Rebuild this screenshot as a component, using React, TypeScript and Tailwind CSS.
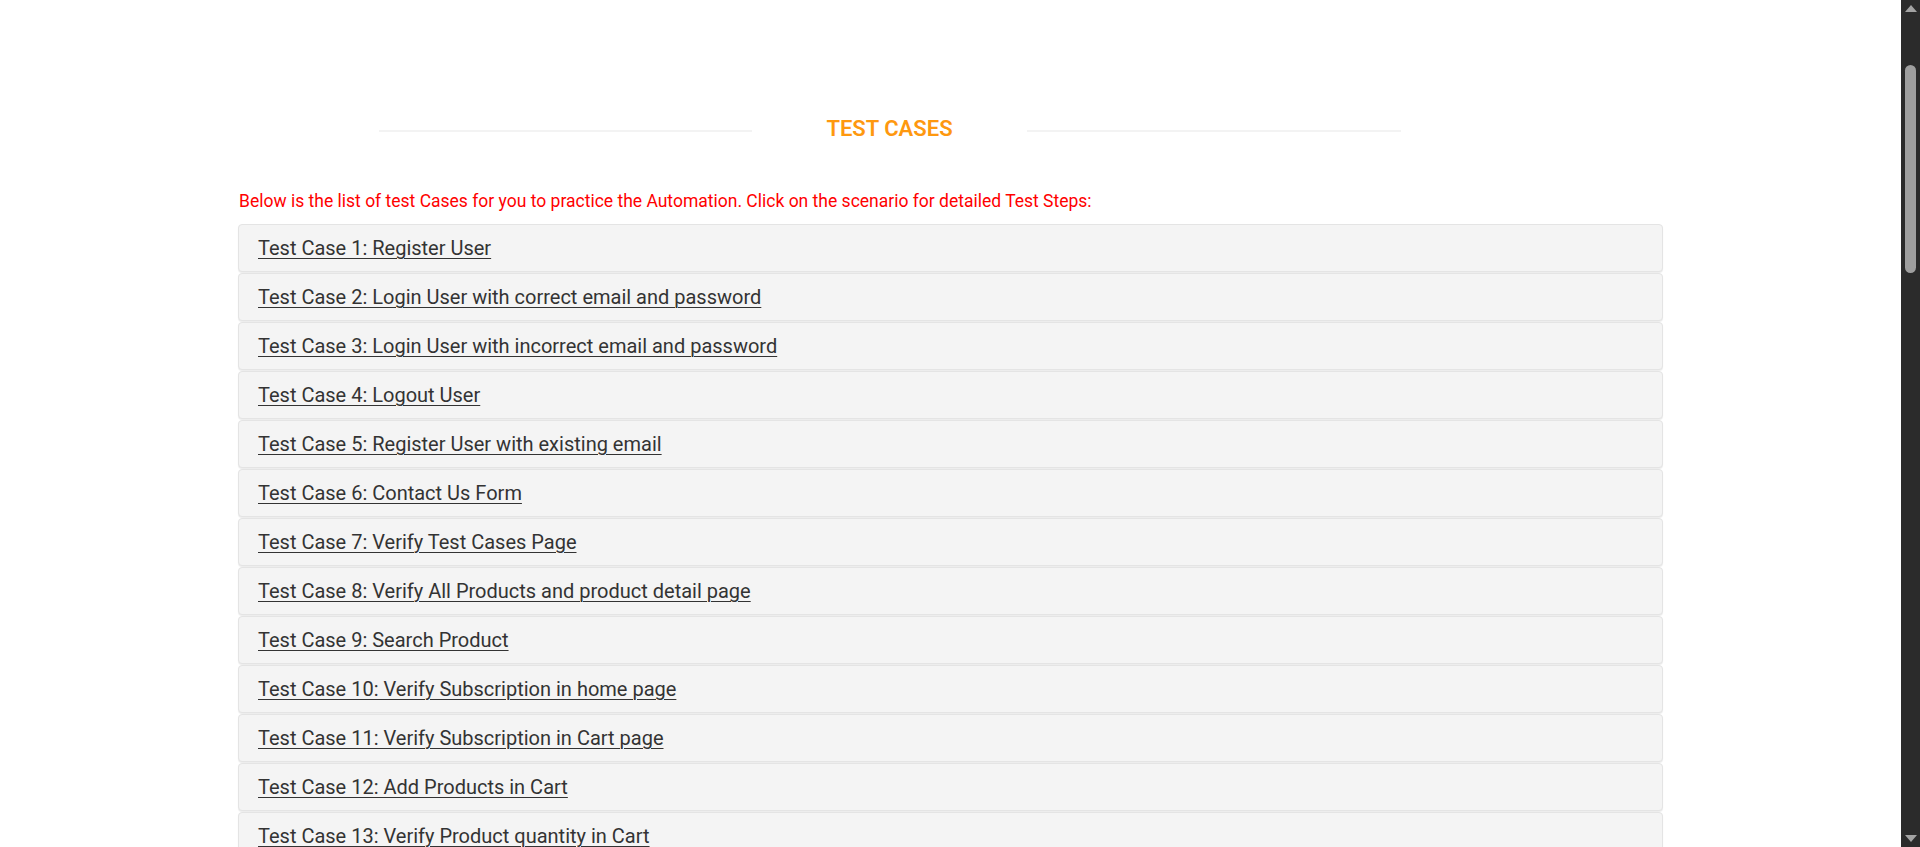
import React from 'react';

const cases = [
  'Test Case 1: Register User',
  'Test Case 2: Login User with correct email and password',
  'Test Case 3: Login User with incorrect email and password',
  'Test Case 4: Logout User',
  'Test Case 5: Register User with existing email',
  'Test Case 6: Contact Us Form',
  'Test Case 7: Verify Test Cases Page',
  'Test Case 8: Verify All Products and product detail page',
  'Test Case 9: Search Product',
  'Test Case 10: Verify Subscription in home page',
  'Test Case 11: Verify Subscription in Cart page',
  'Test Case 12: Add Products in Cart',
  'Test Case 13: Verify Product quantity in Cart',
  'Test Case 14: Place Order: Register while Checkout',
];

function Scrollbar() {
  return (
    <div className="w-[19px] shrink-0 bg-[#2b2b2b] flex flex-col items-center justify-between py-[5px]">
      <div className="flex flex-col items-center w-full">
        <div className="w-0 h-0 border-l-[6px] border-r-[6px] border-b-[7px] border-l-transparent border-r-transparent border-b-[#a3a3a3]" />
        <div className="mt-[53px] w-[11px] h-[208px] rounded-full bg-[#9f9f9f]" />
      </div>
      <div className="w-0 h-0 border-l-[6px] border-r-[6px] border-t-[7px] border-l-transparent border-r-transparent border-t-[#a3a3a3]" />
    </div>
  );
}

export default function App() {
  return (
    <div className="h-[847px] w-full flex overflow-hidden bg-white" style={{ fontFamily: 'Roboto, "Liberation Sans", sans-serif' }}>
      <div className="flex-1 flex justify-center overflow-hidden">
        <div className="w-[1425px] pt-[115px]">
          {/* heading */}
          <div className="ml-[141px] w-[1022px] flex items-center">
            <div className="w-[373px] h-[2px] bg-[#f3f3f3] mt-[5px]" />
            <h2 className="flex-1 text-center text-[22px] leading-[26px] font-semibold text-[#fe980f] mt-[1px]">TEST CASES</h2>
            <div className="w-[374px] h-[2px] bg-[#f3f3f3] mt-[5px]" />
          </div>

          <p className="mt-[48px] text-[17.5px] leading-[22px] text-[#ff0000] pl-[1px]">
            Below is the list of test Cases for you to practice the Automation. Click on the scenario for detailed Test Steps:
          </p>

          <div className="mt-[12px] flex flex-col gap-px">
            {cases.map((c) => (
              <div
                key={c}
                className="h-[48px] shrink-0 flex items-center px-[19px] bg-[#f4f4f4] border border-[#e4e4e4] rounded-[4px] shadow-[0_1px_1px_rgba(0,0,0,0.08)]"
              >
                <a href="#" className="text-[20px] text-[#333333] underline underline-offset-[3px] decoration-1">
                  {c}
                </a>
              </div>
            ))}
          </div>
        </div>
      </div>
      <Scrollbar />
    </div>
  );
}
